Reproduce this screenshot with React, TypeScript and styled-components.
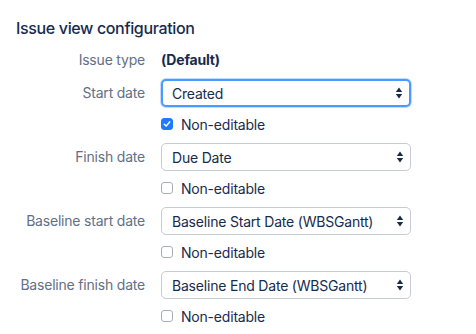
import React from "react";
import styled, { createGlobalStyle } from "styled-components";

const Global = createGlobalStyle`
  html, body { margin: 0; padding: 0; background: #ffffff; }
  body { font-family: Inter, "Noto Sans", "Liberation Sans", sans-serif; color: #172B4D; -webkit-font-smoothing: antialiased; }
`;

const Page = styled.div`
  padding: 16px 16px 0 16px;
`;

const Title = styled.h2`
  margin: 0;
  font-size: 16px;
  line-height: 24px;
  font-weight: 500;
  color: #172B4D;
  letter-spacing: -0.35px;
`;

const Form = styled.div`
  margin-top: 10px;
  display: grid;
  grid-template-columns: 129px 250px;
  column-gap: 16px;
  row-gap: 9px;
  align-items: start;
  letter-spacing: -0.2px;
`;

const Label = styled.div<{ $h: number }>`
  font-size: 14px;
  color: #626F86;
  text-align: right;
  height: ${(p) => p.$h}px;
  line-height: ${(p) => p.$h}px;
  white-space: nowrap;
`;

const Value = styled.div`
  font-size: 14px;
  line-height: 20px;
  font-weight: 700;
  color: #172B4D;
`;

const Stack = styled.div`
  display: flex;
  flex-direction: column;
  gap: 8px;
  margin-bottom: 1px;
`;

const SelectWrap = styled.div<{ $focus?: boolean }>`
  position: relative;
  box-sizing: border-box;
  height: 28px;
  border-radius: 5px;
  border: ${(p) => (p.$focus ? "2px solid #4C9AFF" : "1px solid #C7CCD4")};
  box-shadow: ${(p) => (p.$focus ? "0 0 0 1px rgba(76,154,255,0.35)" : "none")};
  background: #fff;
  display: flex;
  align-items: center;
  padding-left: ${(p) => (p.$focus ? 9 : 10)}px;
  font-size: 14px;
  color: #172B4D;
`;

const Arrows = styled.svg`
  position: absolute;
  right: 6px;
  top: 50%;
  transform: translateY(-50%);
`;

const CheckRow = styled.label`
  display: flex;
  align-items: center;
  gap: 8px;
  height: 18px;
  font-size: 14px;
  color: #172B4D;
`;

const Box = styled.span<{ $checked?: boolean }>`
  box-sizing: border-box;
  width: 12px;
  height: 12px;
  border-radius: 3px;
  border: 1px solid ${(p) => (p.$checked ? "#1D7AFC" : "#A5ADBA")};
  background: ${(p) => (p.$checked ? "#1D7AFC" : "#fff")};
  display: flex;
  align-items: center;
  justify-content: center;
`;

const Select = ({ value, focus }: { value: string; focus?: boolean }) => (
  <SelectWrap $focus={focus}>
    {value}
    <Arrows width="8" height="14" viewBox="0 0 8 14">
      <path d="M4 1.5 L7.2 6 H0.8 Z" fill="#172B4D" />
      <path d="M4 12.5 L7.2 8 H0.8 Z" fill="#172B4D" />
    </Arrows>
  </SelectWrap>
);

const Check = ({ checked }: { checked?: boolean }) => (
  <CheckRow>
    <Box $checked={checked}>
      {checked && (
        <svg width="8" height="8" viewBox="0 0 8 8">
          <path d="M1.3 4.2 L3.2 6 L6.7 1.9" stroke="#fff" strokeWidth="1.5" fill="none" strokeLinecap="round" strokeLinejoin="round" />
        </svg>
      )}
    </Box>
    Non-editable
  </CheckRow>
);

const fields = [
  { label: "Start date", value: "Created", checked: true, focus: true },
  { label: "Finish date", value: "Due Date" },
  { label: "Baseline start date", value: "Baseline Start Date (WBSGantt)" },
  { label: "Baseline finish date", value: "Baseline End Date (WBSGantt)" },
];

export default function App() {
  return (
    <Page>
      <Global />
      <Title>Issue view configuration</Title>
      <Form>
        <Label $h={20}>Issue type</Label>
        <Value>(Default)</Value>
        {fields.map((f) => (
          <React.Fragment key={f.label}>
            <Label $h={28}>{f.label}</Label>
            <Stack>
              <Select value={f.value} focus={f.focus} />
              <Check checked={f.checked} />
            </Stack>
          </React.Fragment>
        ))}
      </Form>
    </Page>
  );
}
